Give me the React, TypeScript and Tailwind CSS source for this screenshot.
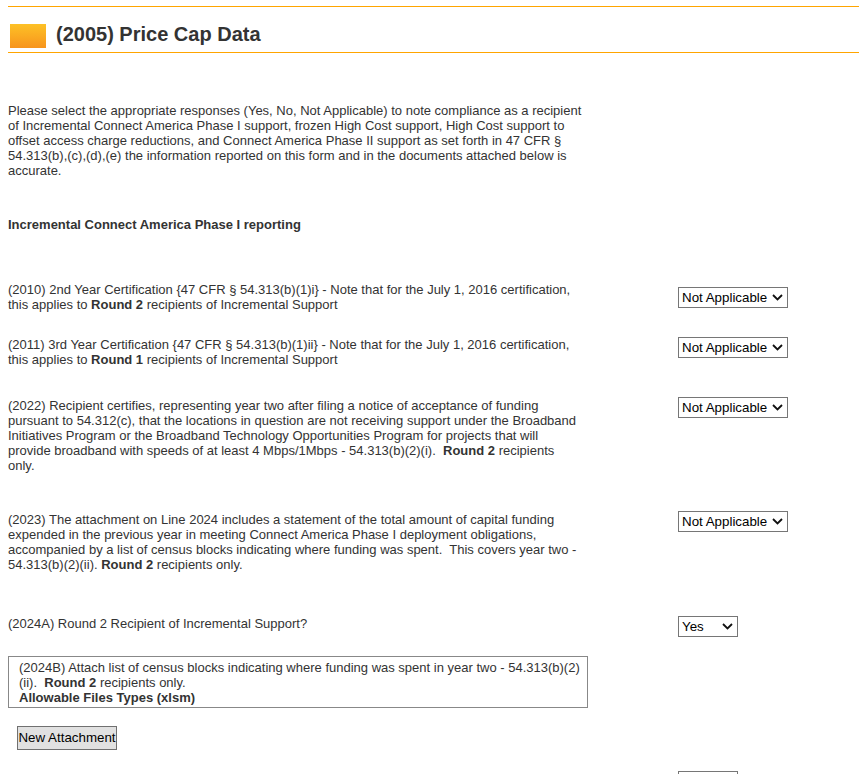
const font = { fontFamily: '"Liberation Sans", Arial, sans-serif' };

function Select({ value, width }: { value: string; width: string }) {
  return (
    <div className={`relative h-[21px] ${width}`}>
      <select
        defaultValue={value}
        className="h-full w-full appearance-none border border-[#767676] bg-white pl-[3px] text-[13.33px] leading-[19px] text-black outline-none"
        style={font}
      >
        <option>{value}</option>
      </select>
      {/* drop arrow */}
      <svg
        className="pointer-events-none absolute right-[5px] top-[7px]"
        width="11"
        height="7"
        viewBox="0 0 11 7"
        fill="none"
      >
        <path d="M1 1l4.5 4.5L10 1" stroke="#111" strokeWidth="1.8" />
      </svg>
    </div>
  );
}

function Row({
  children,
  select,
  className = '',
  selectOffset = '',
}: {
  children: React.ReactNode;
  select?: React.ReactNode;
  className?: string;
  selectOffset?: string;
}) {
  return (
    <div className={`flex ${className}`}>
      <div className="w-[575px] leading-[15px]">{children}</div>
      <div className={`ml-[95px] ${selectOffset}`}>{select}</div>
    </div>
  );
}

export default function App() {
  return (
    <div className="min-h-[774px] bg-white pb-10 text-[13px] text-[#333]" style={font}>
      {/* 页头 */}
      <div className="ml-2 mt-[6px] flex items-center border-y border-[#ffa500] pt-[17px] pb-[4px]">
        <div className="ml-[2px] h-6 w-9 bg-gradient-to-b from-[#fdc126] to-[#f7941d]" />
        <h1 className="ml-[10px] mb-[4px] text-[20px] font-bold leading-[20px] text-[#333]">(2005) Price Cap Data</h1>
      </div>

      <div className="px-2">
        <p className="mt-[50px] w-[575px] leading-[15px]">
          Please select the appropriate responses (Yes, No, Not Applicable) to note compliance as a recipient of
          Incremental Connect America Phase I support, frozen High Cost support, High Cost support to offset access
          charge reductions, and Connect America Phase II support as set forth in 47 CFR § 54.313(b),(c),(d),(e) the
          information reported on this form and in the documents attached below is accurate.
        </p>

        <p className="mt-[39px] font-bold leading-[15px]">Incremental Connect America Phase I reporting</p>

        <Row className="mt-[50px]" selectOffset="mt-[5px]" select={<Select value="Not Applicable" width="w-[110px]" />}>
          (2010) 2nd Year Certification {'{'}47 CFR § 54.313(b)(1)i{'}'} - Note that for the July 1, 2016 certification,
          this applies to <b>Round 2</b> recipients of Incremental Support
        </Row>

        <Row className="mt-[25px]" select={<Select value="Not Applicable" width="w-[110px]" />}>
          (2011) 3rd Year Certification {'{'}47 CFR § 54.313(b)(1)ii{'}'} - Note that for the July 1, 2016 certification,
          this applies to <b>Round 1</b> recipients of Incremental Support
        </Row>

        <Row className="mt-[31px]" selectOffset="-mt-[1px]" select={<Select value="Not Applicable" width="w-[110px]" />}>
          (2022) Recipient certifies, representing year two after filing a notice of acceptance of funding pursuant to
          54.312(c), that the locations in question are not receiving support under the Broadband Initiatives Program or
          the Broadband Technology Opportunities Program for projects that will provide broadband with speeds of at least
          4 Mbps/1Mbps - 54.313(b)(2)(i).&nbsp; <b>Round 2</b> recipients only.
        </Row>

        <Row className="mt-[39px]" selectOffset="-mt-[1px]" select={<Select value="Not Applicable" width="w-[110px]" />}>
          (2023) The attachment on Line 2024 includes a statement of the total amount of capital funding expended in the
          previous year in meeting Connect America Phase I deployment obligations, accompanied by a list of census blocks
          indicating where funding was spent.&nbsp; This covers year two - 54.313(b)(2)(ii). <b>Round 2</b> recipients
          only.
        </Row>

        <Row className="mt-[44px]" select={<Select value="Yes" width="w-[60px]" />}>
          (2024A) Round 2 Recipient of Incremental Support?
        </Row>

        <div className="mt-[19px] w-[580px] border border-[#888] pt-[3px] pb-[2px] pl-[10px] leading-[15px]">
          (2024B) Attach list of census blocks indicating where funding was spent in year two - 54.313(b)(2)
          (ii).&nbsp; <b>Round 2</b> recipients only.
          <br />
          <b>Allowable Files Types (xlsm)</b>
        </div>

        <button
          className="mt-[18px] ml-[9px] h-6 w-[100px] border border-[#707070] bg-[#e1e1e1] text-[13.33px] text-black"
          style={font}
        >
          New Attachment
        </button>

        <div className="mt-[21px] ml-[670px]">
          <Select value="" width="w-[60px]" />
        </div>
      </div>
    </div>
  );
}
